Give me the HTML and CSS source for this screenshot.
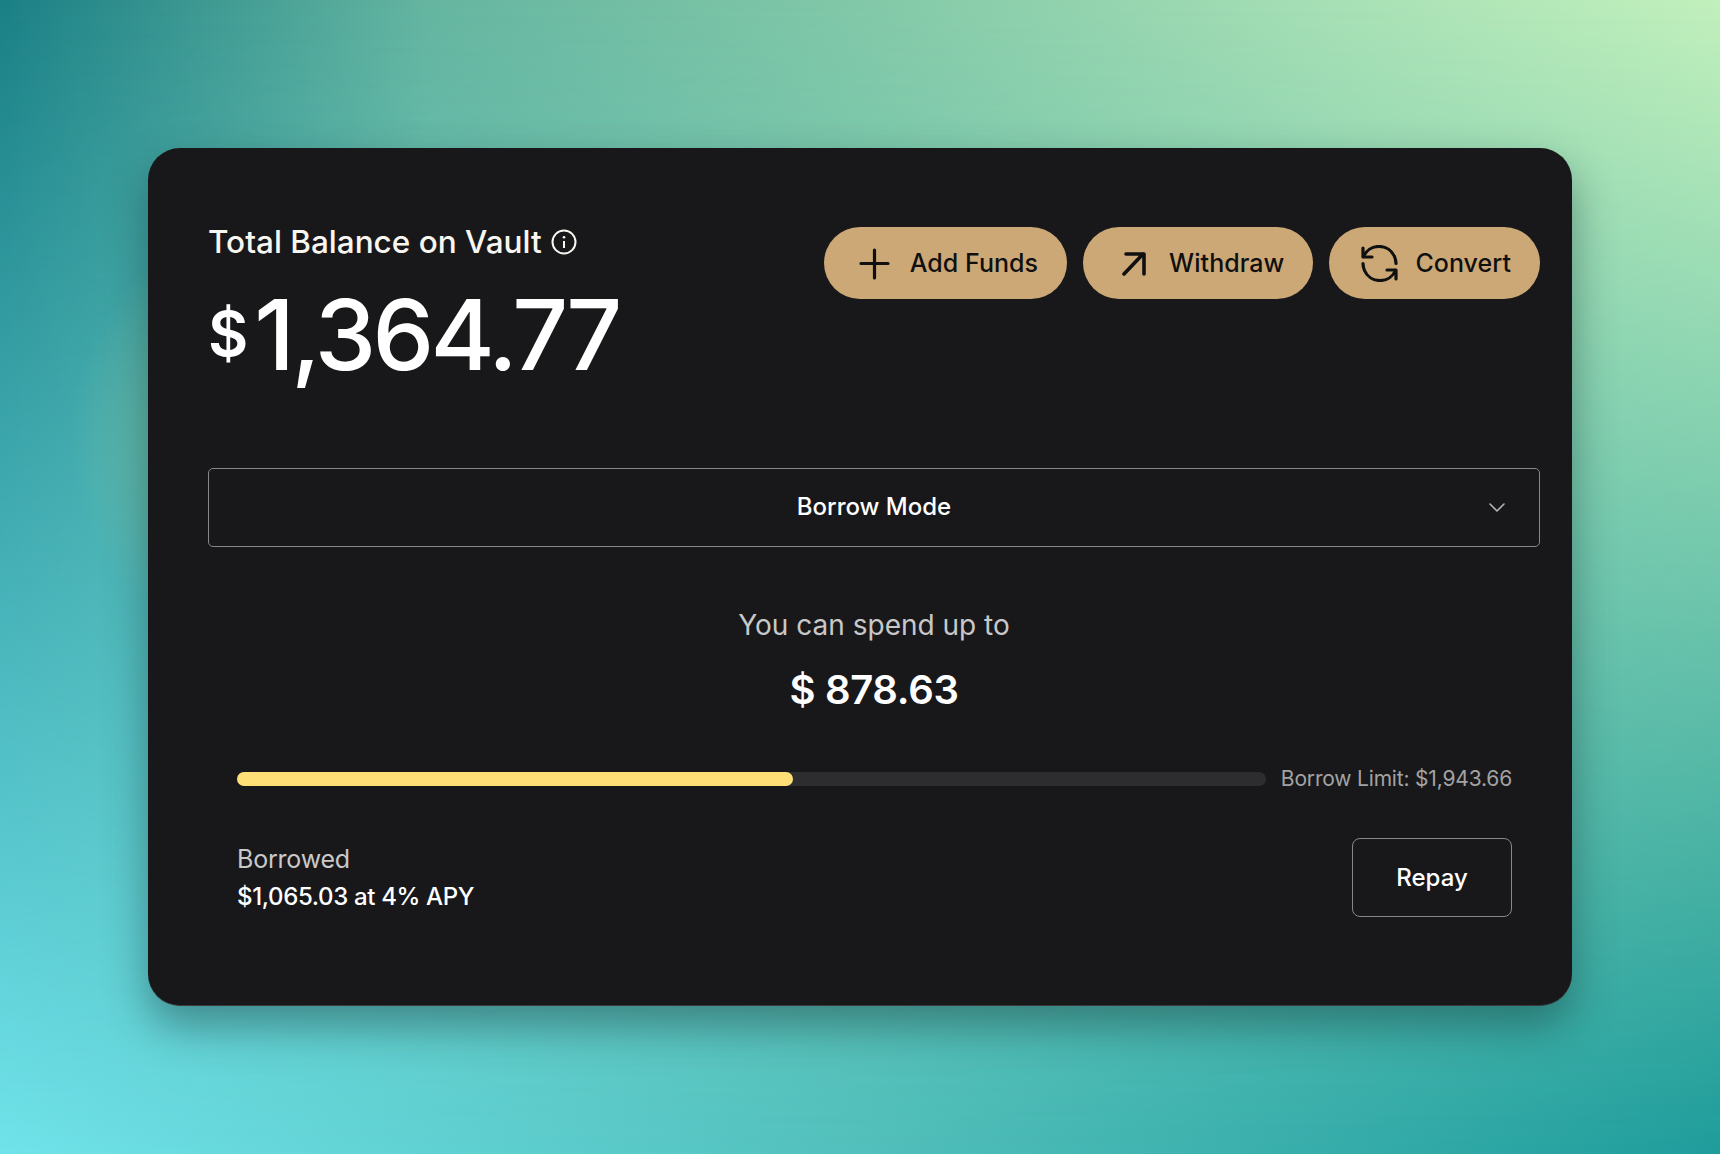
FILE: index.html
```html
<!DOCTYPE html>
<html lang="en">
<head>
    <meta charset="UTF-8">
    <meta name="viewport" content="width=device-width, initial-scale=1.0">
    <title>Vault</title>
    <link rel="stylesheet" href="styles.css">
</head>
<body>
    <div class="card">
        <div class="header">
            <div class="balance">
                <div class="balance-title">
                    <span>Total Balance on Vault</span>
                    <svg class="info" viewBox="0 0 26 26" fill="none" stroke="currentColor" stroke-width="2">
                        <circle cx="13" cy="13" r="11.5"/>
                        <path d="M13 12v7"/>
                        <circle cx="13" cy="8.2" r="1.3" fill="currentColor" stroke="none"/>
                    </svg>
                </div>
                <div class="balance-amount"><span class="currency">$</span>1,364.77</div>
            </div>
            <div class="actions">
                <button class="action">
                    <svg class="action-icon" viewBox="0 0 37 37" fill="none" stroke="currentColor" stroke-width="3.2" stroke-linecap="round">
                        <path d="M18.5 5v28M5 18.5h27"/>
                    </svg>
                    Add Funds
                </button>
                <button class="action">
                    <svg class="action-icon" viewBox="0 0 37 37" fill="none" stroke="currentColor" stroke-width="3.6" stroke-linecap="round" stroke-linejoin="round">
                        <path d="M9 29L28 9M11 9h18v20"/>
                    </svg>
                    Withdraw
                </button>
                <button class="action">
                    <svg class="action-icon" viewBox="0 0 37 37" fill="none" stroke="currentColor" stroke-width="3.2" stroke-linecap="round" stroke-linejoin="round">
                        <path d="M2 3v9h9"/>
                        <path d="M2.5 11.5C5 5.5 11 1.5 18 1.5c7 0 13 4 15.5 10 1 2.5 1.5 4.5 1.5 7"/>
                        <path d="M35 34v-9h-9"/>
                        <path d="M34.5 25.5C32 31.5 26 35.5 19 35.5c-7 0-13-4-15.5-10-1-2.5-1.5-4.5-1.5-7"/>
                    </svg>
                    Convert
                </button>
            </div>
        </div>

        <div class="mode-select">
            <span class="mode-label">Borrow Mode</span>
            <svg class="chevron" viewBox="0 0 16 9" fill="none" stroke="currentColor" stroke-width="1.6" stroke-linecap="round" stroke-linejoin="round">
                <path d="M1 1l7 7 7-7"/>
            </svg>
        </div>

        <div class="spend">
            <div class="spend-label">You can spend up to</div>
            <div class="spend-amount">$ 878.63</div>
        </div>

        <div class="details">
            <div class="limit-row">
                <div class="track"><div class="fill"></div></div>
                <span class="limit-text">Borrow Limit: $1,943.66</span>
            </div>
            <div class="borrow-row">
                <div>
                    <div class="borrow-label">Borrowed</div>
                    <div class="borrow-value">$1,065.03 at 4% APY</div>
                </div>
                <button class="repay">Repay</button>
            </div>
        </div>
    </div>
</body>
</html>
```

FILE: styles.css
```css
* {
    box-sizing: border-box;
}
html, body {
    margin: 0;
    height: 1154px;
    overflow: hidden;
}
body {
    position: relative;
    padding: 148px 148px 0;
    font-family: "Inter", "Noto Sans", sans-serif;
    background: linear-gradient(to right, #70e3ea 0%, #52c0bc 50%, #1f9d9c 100%);
}
/* top colours fade out towards the bottom row on the body */
body::before {
    content: "";
    position: absolute;
    inset: 0;
    z-index: -1;
    background: linear-gradient(to right, #1a7f85 0%, #65b5a0 25%, #82c8a8 50%, #a8e0b5 78%, #c2f0bc 100%);
    -webkit-mask-image: linear-gradient(to bottom, #000 0%, transparent 100%);
    mask-image: linear-gradient(to bottom, #000 0%, transparent 100%);
}
/* soft glow behind the left side of the card */
body::after {
    content: "";
    position: absolute;
    left: 70px;
    top: 200px;
    width: 500px;
    height: 480px;
    z-index: -1;
    background: radial-gradient(closest-side, rgba(115, 190, 165, 0.75) 55%, rgba(115, 190, 165, 0) 100%);
}
.card {
    width: 1424px;
    height: 858px;
    padding: 79px 32px 0 60px;
    background: #18181b;
    border-radius: 32px;
    border-bottom: 1px solid #3a3a3c;
    box-shadow: 0 20px 44px rgba(20, 50, 50, 0.45);
    color: #fff;
}
.header {
    display: flex;
    justify-content: space-between;
    align-items: flex-start;
    height: 241px;
}
.balance-title {
    display: flex;
    align-items: center;
    gap: 9px;
    margin-top: -2px;
    font-size: 31.5px;
    line-height: 34px;
    font-weight: 500;
    color: #f8f6f0;
}
.info {
    width: 26px;
    height: 26px;
}
.balance-amount {
    margin-top: 20px;
    font-size: 98px;
    line-height: 110px;
    font-weight: 500;
    letter-spacing: -3.7px;
}
.currency {
    font-size: 62px;
    font-weight: 600;
    letter-spacing: 0;
    margin-right: 6px;
    vertical-align: 14px;
}
.actions {
    display: flex;
    gap: 16px;
}
.action {
    display: flex;
    align-items: center;
    gap: 17px;
    height: 72px;
    padding: 0 29px 0 32px;
    border: none;
    border-radius: 36px;
    background: #cca877;
    color: #101010;
    font-family: inherit;
    font-size: 25px;
    font-weight: 500;
    letter-spacing: 0.05px;
    white-space: nowrap;
}
.action-icon {
    width: 37px;
    height: 37px;
    flex: none;
}
.mode-select {
    display: grid;
    grid-template-columns: 1fr auto 1fr;
    align-items: center;
    height: 79px;
    padding: 0 34px;
    border: 1px solid #87878a;
    border-radius: 5px;
}
.mode-label {
    grid-column: 2;
    margin-top: -2px;
    font-size: 24px;
    font-weight: 500;
}
.chevron {
    grid-column: 3;
    justify-self: end;
    width: 16px;
    height: 9px;
    color: #b5b5b5;
}
.spend {
    margin-top: 58px;
    text-align: center;
}
.spend-label {
    font-size: 28px;
    line-height: 40px;
    color: #c8c8c8;
}
.spend-amount {
    margin-top: 21px;
    font-size: 40px;
    line-height: 48px;
    font-weight: 600;
    letter-spacing: -0.3px;
}
.details {
    padding: 0 28px 0 29px;
}
.limit-row {
    display: flex;
    align-items: center;
    gap: 15px;
    margin-top: 52px;
}
.track {
    flex: 1;
    height: 14px;
    border-radius: 7px;
    background: #2d2d2f;
}
.fill {
    width: 54%;
    height: 100%;
    border-radius: 7px;
    background: #ffdf76;
}
.limit-text {
    font-size: 21px;
    letter-spacing: -0.18px;
    color: #a3a3a3;
    white-space: nowrap;
}
.borrow-row {
    display: flex;
    justify-content: space-between;
    align-items: center;
    margin-top: 47px;
}
.borrow-label {
    font-size: 25px;
    line-height: 38px;
    letter-spacing: -0.2px;
    color: #c9c9c9;
}
.borrow-value {
    font-size: 24px;
    line-height: 38px;
    font-weight: 500;
    letter-spacing: -0.35px;
}
.repay {
    width: 160px;
    height: 79px;
    background: transparent;
    border: 1px solid #87878a;
    border-radius: 8px;
    color: #fff;
    font-family: inherit;
    font-size: 24px;
    font-weight: 500;
}
```
